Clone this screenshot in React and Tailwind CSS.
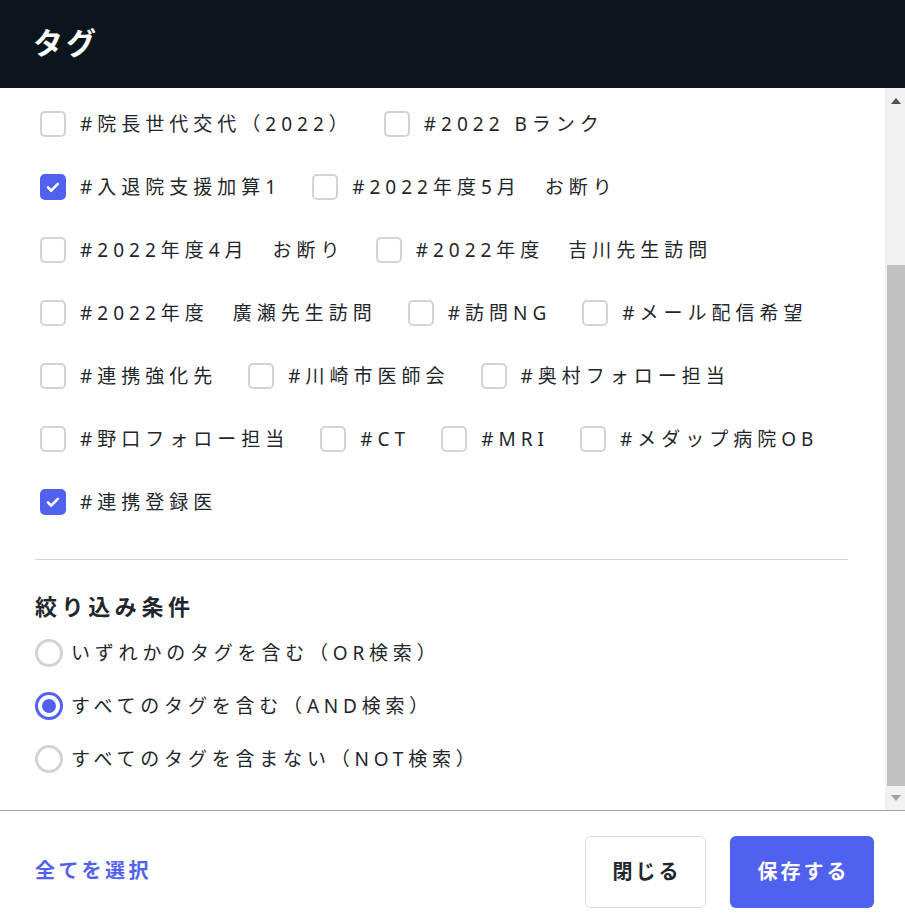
import React from "react";

const rows = [
  [["#院長世代交代（2022）", false], ["#2022 Bランク", false]],
  [["#入退院支援加算1", true], ["#2022年度5月　お断り", false]],
  [["#2022年度4月　お断り", false], ["#2022年度　吉川先生訪問", false]],
  [["#2022年度　廣瀬先生訪問", false], ["#訪問NG", false], ["#メール配信希望", false]],
  [["#連携強化先", false], ["#川崎市医師会", false], ["#奥村フォロー担当", false]],
  [["#野口フォロー担当", false], ["#CT", false], ["#MRI", false], ["#メダップ病院OB", false]],
  [["#連携登録医", true]],
];

const radios = [
  ["いずれかのタグを含む（OR検索）", false],
  ["すべてのタグを含む（AND検索）", true],
  ["すべてのタグを含まない（NOT検索）", false],
];

function Box({ checked }) {
  if (checked) {
    return (
      <span className="flex h-[26px] w-[26px] shrink-0 items-center justify-center rounded-[5px] bg-[#5061f0]">
        <svg width="18" height="18" viewBox="0 0 16 16" fill="none">
          <path d="M3.5 8.4l2.9 2.9 5.9-6.1" stroke="white" strokeWidth="2.3" strokeLinecap="round" strokeLinejoin="round" />
        </svg>
      </span>
    );
  }
  return <span className="h-[26px] w-[26px] shrink-0 rounded-[5px] border-2 border-[#d1d4d6] bg-white" />;
}

function Radio({ checked }) {
  if (checked) {
    return (
      <span className="flex h-[28px] w-[28px] shrink-0 items-center justify-center rounded-full border-[3px] border-[#5061f0] bg-white">
        <span className="h-[14px] w-[14px] rounded-full bg-[#5061f0]" />
      </span>
    );
  }
  return <span className="h-[28px] w-[28px] shrink-0 rounded-full border-[3px] border-[#d1d4d6] bg-white" />;
}

export default function App() {
  return (
    <div
      className="flex h-[923px] w-[905px] flex-col overflow-hidden bg-white text-[#1f272c]"
      style={{ fontFamily: '"Noto Sans", "Noto Sans CJK JP", sans-serif' }}
    >
      <div className="flex h-[88px] shrink-0 items-center bg-[#0b161c] pb-[3px] pl-[33px]">
        <span className="text-[30px] font-bold tracking-[3px] text-white">タグ</span>
      </div>

      <div className="flex h-[722px] shrink-0">
        <div className="flex flex-1 flex-col overflow-hidden pl-[35px] pr-[37px] pt-[23px]">
          <div className="flex flex-col gap-y-[37px] pl-[5px]">
            {rows.map((row, i) => (
              <div key={i} className="flex h-[26px] items-center gap-x-[31px]">
                {row.map(([label, checked]) => (
                  <div key={label} className="flex items-center gap-x-[14px]">
                    <Box checked={checked} />
                    <span className="whitespace-pre text-[19px] leading-[26px] tracking-[5px]">{label}</span>
                  </div>
                ))}
              </div>
            ))}
          </div>
          <div className="mt-[44px] h-px bg-[#d5d5d5]" />
          <div className="mt-[33px] text-[22px] font-bold leading-[26px] tracking-[4.6px]">絞り込み条件</div>
          <div className="mt-[20px] flex flex-col gap-y-[25px]">
            {radios.map(([label, checked]) => (
              <div key={label} className="flex h-[28px] items-center gap-x-[8px]">
                <Radio checked={checked} />
                <span className="whitespace-pre text-[19px] leading-[26px] tracking-[4.8px]">{label}</span>
              </div>
            ))}
          </div>
        </div>

        <div className="flex w-[20px] shrink-0 flex-col bg-[#f1f1f1]">
          <div className="flex h-[26px] items-center justify-center pl-[2px]">
            <span className="h-0 w-0 border-x-[5px] border-b-[6px] border-x-transparent border-b-[#505050]" />
          </div>
          <div className="h-[151px]" />
          <div className="ml-[2px] h-[521px] bg-[#c1c1c1]" />
          <div className="flex flex-1 items-center justify-center pl-[2px]">
            <span className="h-0 w-0 border-x-[5px] border-t-[6px] border-x-transparent border-t-[#a3a3a3]" />
          </div>
        </div>
      </div>

      <div className="h-px shrink-0 bg-[#a4a4a4]" />

      <div className="flex flex-1 items-start justify-between pl-[35px] pr-[31px] pt-[25px]">
        <button className="mt-[22px] text-[20px] font-bold leading-[26px] tracking-[3.5px] text-[#5061f0]">全てを選択</button>
        <div className="flex gap-x-[24px]">
          <button className="flex h-[72px] w-[121px] items-center justify-center rounded-[6px] border border-[#dedede] bg-white pl-[3px] text-[20px] font-bold tracking-[3px] text-[#1f272c]">
            閉じる
          </button>
          <button className="flex h-[72px] w-[144px] items-center justify-center rounded-[6px] bg-[#5061f0] pl-[3px] text-[20px] font-bold tracking-[3px] text-white">
            保存する
          </button>
        </div>
      </div>
    </div>
  );
}
